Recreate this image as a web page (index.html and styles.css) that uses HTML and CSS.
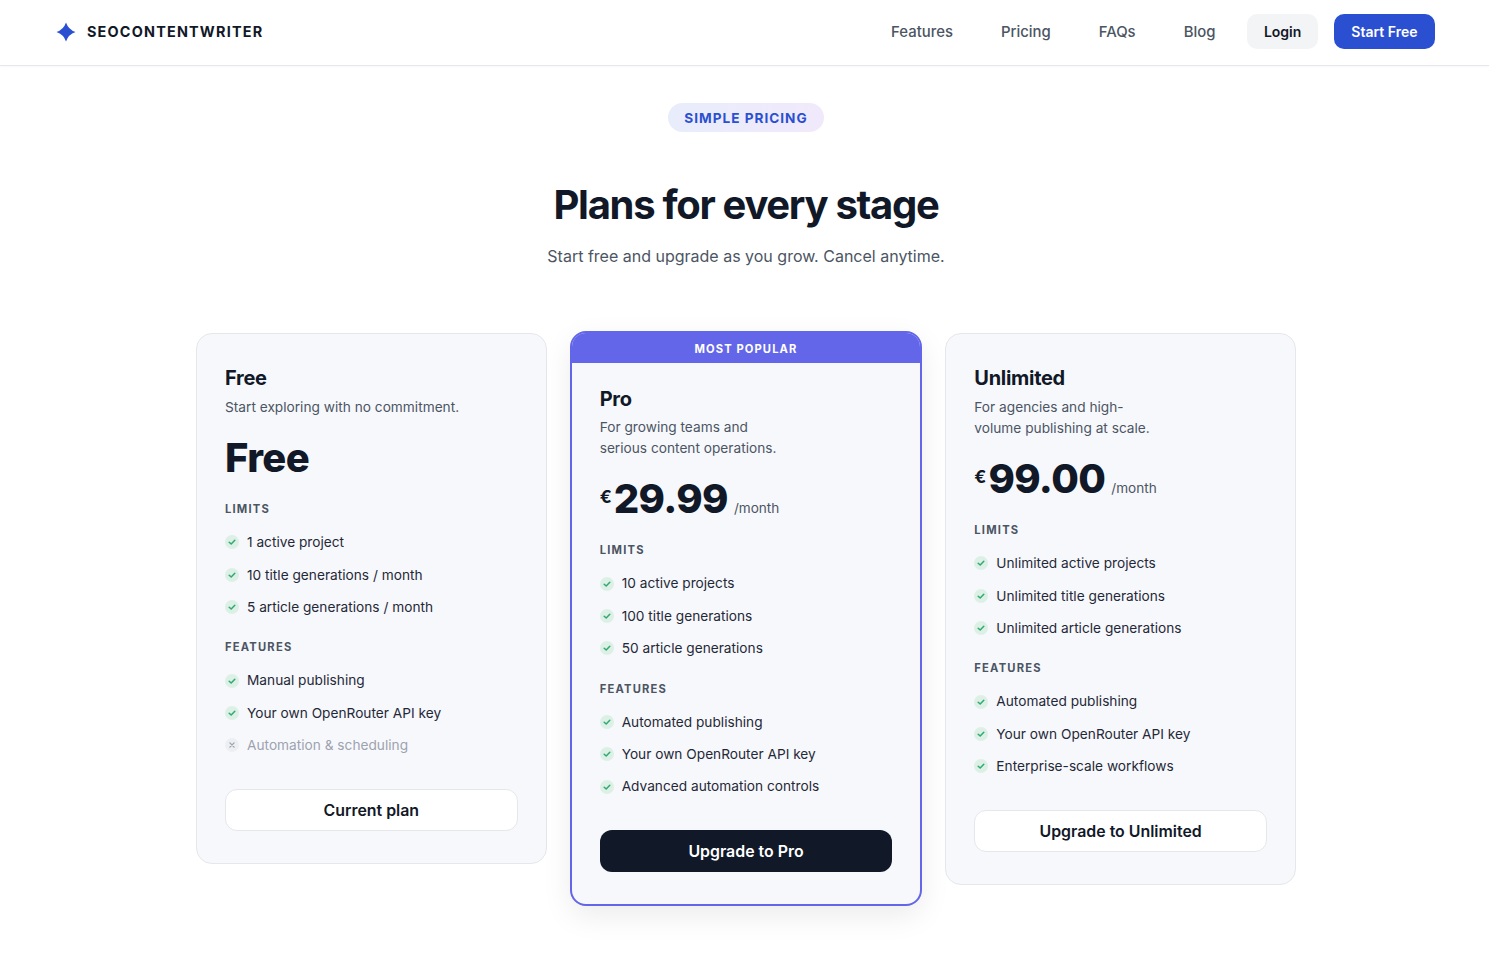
FILE: index.html
```html
<!DOCTYPE html>
<html lang="en">
<head>
    <meta charset="UTF-8">
    <meta name="viewport" content="width=device-width, initial-scale=1.0">
    <title>Pricing - SEOContentWriter</title>
    <link rel="stylesheet" href="styles.css">
</head>
<body>
    <!-- Header -->
    <header class="header">
        <a class="brand" href="#">
            <svg class="brand__icon" viewBox="0 0 20 20" aria-hidden="true">
                <path d="M10 0.5 Q12.4 7.6 19.5 10 Q12.4 12.4 10 19.5 Q7.6 12.4 0.5 10 Q7.6 7.6 10 0.5 Z"/>
            </svg>
            <span>SEOCONTENTWRITER</span>
        </a>
        <nav class="nav">
            <a class="nav__link" href="#">Features</a>
            <a class="nav__link" href="#">Pricing</a>
            <a class="nav__link" href="#">FAQs</a>
            <a class="nav__link" href="#">Blog</a>
            <a class="nav__btn nav__btn--login" href="#">Login</a>
            <a class="nav__btn nav__btn--start" href="#">Start Free</a>
        </nav>
    </header>

    <main class="pricing">
        <div class="pill">SIMPLE PRICING</div>
        <h1 class="pricing__title">Plans for every stage</h1>
        <p class="pricing__sub">Start free and upgrade as you grow. Cancel anytime.</p>

        <div class="plans">
            <!-- Free -->
            <section class="plan">
                <div class="plan__body">
                    <h2 class="plan__name">Free</h2>
                    <p class="plan__desc">Start exploring with no commitment.</p>
                    <div class="price"><span class="price__value">Free</span></div>
                    <h3 class="plan__label">LIMITS</h3>
                    <ul class="list">
                        <li class="list__item"><svg class="tick" viewBox="0 0 14 14"><circle class="tick__bg" cx="7" cy="7" r="7"/><path class="tick__mark" d="M4.2 7.2 L6.2 9 L9.8 5.2"/></svg>1 active project</li>
                        <li class="list__item"><svg class="tick" viewBox="0 0 14 14"><circle class="tick__bg" cx="7" cy="7" r="7"/><path class="tick__mark" d="M4.2 7.2 L6.2 9 L9.8 5.2"/></svg>10 title generations / month</li>
                        <li class="list__item"><svg class="tick" viewBox="0 0 14 14"><circle class="tick__bg" cx="7" cy="7" r="7"/><path class="tick__mark" d="M4.2 7.2 L6.2 9 L9.8 5.2"/></svg>5 article generations / month</li>
                    </ul>
                    <h3 class="plan__label">FEATURES</h3>
                    <ul class="list">
                        <li class="list__item"><svg class="tick" viewBox="0 0 14 14"><circle class="tick__bg" cx="7" cy="7" r="7"/><path class="tick__mark" d="M4.2 7.2 L6.2 9 L9.8 5.2"/></svg>Manual publishing</li>
                        <li class="list__item"><svg class="tick" viewBox="0 0 14 14"><circle class="tick__bg" cx="7" cy="7" r="7"/><path class="tick__mark" d="M4.2 7.2 L6.2 9 L9.8 5.2"/></svg>Your own OpenRouter API key</li>
                        <li class="list__item list__item--off"><svg class="tick" viewBox="0 0 14 14"><circle class="cross__bg" cx="7" cy="7" r="7"/><path class="cross__mark" d="M4.9 4.9 L9.1 9.1 M9.1 4.9 L4.9 9.1"/></svg>Automation &amp; scheduling</li>
                    </ul>
                    <a class="btn btn--light" href="#">Current plan</a>
                </div>
            </section>

            <!-- Pro -->
            <section class="plan plan--popular">
                <div class="plan__badge">MOST POPULAR</div>
                <div class="plan__body">
                    <h2 class="plan__name">Pro</h2>
                    <p class="plan__desc">For growing teams and<br>serious content operations.</p>
                    <div class="price"><span class="price__cur">€</span><span class="price__value">29.99</span><span class="price__per">/month</span></div>
                    <h3 class="plan__label">LIMITS</h3>
                    <ul class="list">
                        <li class="list__item"><svg class="tick" viewBox="0 0 14 14"><circle class="tick__bg" cx="7" cy="7" r="7"/><path class="tick__mark" d="M4.2 7.2 L6.2 9 L9.8 5.2"/></svg>10 active projects</li>
                        <li class="list__item"><svg class="tick" viewBox="0 0 14 14"><circle class="tick__bg" cx="7" cy="7" r="7"/><path class="tick__mark" d="M4.2 7.2 L6.2 9 L9.8 5.2"/></svg>100 title generations</li>
                        <li class="list__item"><svg class="tick" viewBox="0 0 14 14"><circle class="tick__bg" cx="7" cy="7" r="7"/><path class="tick__mark" d="M4.2 7.2 L6.2 9 L9.8 5.2"/></svg>50 article generations</li>
                    </ul>
                    <h3 class="plan__label">FEATURES</h3>
                    <ul class="list">
                        <li class="list__item"><svg class="tick" viewBox="0 0 14 14"><circle class="tick__bg" cx="7" cy="7" r="7"/><path class="tick__mark" d="M4.2 7.2 L6.2 9 L9.8 5.2"/></svg>Automated publishing</li>
                        <li class="list__item"><svg class="tick" viewBox="0 0 14 14"><circle class="tick__bg" cx="7" cy="7" r="7"/><path class="tick__mark" d="M4.2 7.2 L6.2 9 L9.8 5.2"/></svg>Your own OpenRouter API key</li>
                        <li class="list__item"><svg class="tick" viewBox="0 0 14 14"><circle class="tick__bg" cx="7" cy="7" r="7"/><path class="tick__mark" d="M4.2 7.2 L6.2 9 L9.8 5.2"/></svg>Advanced automation controls</li>
                    </ul>
                    <a class="btn btn--dark" href="#">Upgrade to Pro</a>
                </div>
            </section>

            <!-- Unlimited -->
            <section class="plan">
                <div class="plan__body">
                    <h2 class="plan__name">Unlimited</h2>
                    <p class="plan__desc">For agencies and high-<br>volume publishing at scale.</p>
                    <div class="price"><span class="price__cur">€</span><span class="price__value">99.00</span><span class="price__per">/month</span></div>
                    <h3 class="plan__label">LIMITS</h3>
                    <ul class="list">
                        <li class="list__item"><svg class="tick" viewBox="0 0 14 14"><circle class="tick__bg" cx="7" cy="7" r="7"/><path class="tick__mark" d="M4.2 7.2 L6.2 9 L9.8 5.2"/></svg>Unlimited active projects</li>
                        <li class="list__item"><svg class="tick" viewBox="0 0 14 14"><circle class="tick__bg" cx="7" cy="7" r="7"/><path class="tick__mark" d="M4.2 7.2 L6.2 9 L9.8 5.2"/></svg>Unlimited title generations</li>
                        <li class="list__item"><svg class="tick" viewBox="0 0 14 14"><circle class="tick__bg" cx="7" cy="7" r="7"/><path class="tick__mark" d="M4.2 7.2 L6.2 9 L9.8 5.2"/></svg>Unlimited article generations</li>
                    </ul>
                    <h3 class="plan__label">FEATURES</h3>
                    <ul class="list">
                        <li class="list__item"><svg class="tick" viewBox="0 0 14 14"><circle class="tick__bg" cx="7" cy="7" r="7"/><path class="tick__mark" d="M4.2 7.2 L6.2 9 L9.8 5.2"/></svg>Automated publishing</li>
                        <li class="list__item"><svg class="tick" viewBox="0 0 14 14"><circle class="tick__bg" cx="7" cy="7" r="7"/><path class="tick__mark" d="M4.2 7.2 L6.2 9 L9.8 5.2"/></svg>Your own OpenRouter API key</li>
                        <li class="list__item"><svg class="tick" viewBox="0 0 14 14"><circle class="tick__bg" cx="7" cy="7" r="7"/><path class="tick__mark" d="M4.2 7.2 L6.2 9 L9.8 5.2"/></svg>Enterprise-scale workflows</li>
                    </ul>
                    <a class="btn btn--light" href="#">Upgrade to Unlimited</a>
                </div>
            </section>
        </div>
    </main>
</body>
</html>
```

FILE: styles.css
```css
* {
    margin: 0;
    padding: 0;
    box-sizing: border-box;
}

body {
    font-family: Inter, "Liberation Sans", sans-serif;
    background: #fff;
    color: #111827;
}

a {
    text-decoration: none;
    color: inherit;
}

ul {
    list-style: none;
}

/* Header */
.header {
    display: flex;
    justify-content: space-between;
    align-items: center;
    height: 66px;
    padding: 0 54px 2px 56px;
    border-bottom: 1px solid #e5e7eb;
    box-shadow: 0 1px 2px rgba(0, 0, 0, 0.03);
}

.brand {
    display: flex;
    align-items: center;
    gap: 11px;
    font-size: 14.4px;
    font-weight: 700;
    letter-spacing: 1.2px;
}

.brand__icon {
    width: 20px;
    height: 20px;
    fill: #2b4fd1;
}

.nav {
    display: flex;
    align-items: center;
}

.nav__link {
    margin-right: 48px;
    font-size: 14.9px;
    font-weight: 500;
    color: #4b5563;
}

.nav__link:nth-child(4) {
    margin-right: 32px;
}

.nav__btn {
    display: flex;
    align-items: center;
    height: 35px;
    border-radius: 10px;
    font-size: 14px;
    font-weight: 600;
}

.nav__btn--login {
    padding: 0 16.5px;
    background: #f3f4f6;
    margin-right: 16px;
}

.nav__btn--start {
    padding: 0 17.5px;
    background: #2b4fd1;
    color: #fff;
}

/* Heading */
.pricing {
    display: flex;
    flex-direction: column;
    align-items: center;
    padding-top: 37px;
    padding-left: 3px;
}

.pill {
    height: 29px;
    line-height: 30px;
    padding: 0 16px;
    border-radius: 15px;
    background: linear-gradient(90deg, #e8edfb, #f1e9fb);
    color: #2b4fd1;
    font-size: 13.6px;
    font-weight: 700;
    letter-spacing: 1px;
}

.pricing__title {
    margin-top: 49px;
    font-size: 40px;
    line-height: 48px;
    font-weight: 700;
    letter-spacing: -1.3px;
}

.pricing__sub {
    margin-top: 14px;
    font-size: 16px;
    line-height: 26px;
    color: #4b5563;
}

/* Plans */
.plans {
    display: grid;
    grid-template-columns: repeat(3, 1fr);
    gap: 24px;
    align-items: start;
    width: 1100px;
    margin-top: 64px;
    margin-bottom: 55px;
}

.plan {
    background: #f7f8fc;
    border: 1px solid #e5e7eb;
    border-radius: 16px;
}

.plan--popular {
    margin: -2px -1px 0;
    border: 2px solid #6366e8;
    overflow: hidden;
    box-shadow: 0 10px 30px rgba(0, 0, 0, 0.08);
}

.plan__badge {
    height: 30px;
    line-height: 32px;
    background: #6366e8;
    color: #fff;
    text-align: center;
    font-size: 11.2px;
    font-weight: 700;
    letter-spacing: 1.1px;
}

.plan__body {
    padding: 30px 28px 32px;
}

.plan--popular .plan__body {
    padding-top: 21.6px;
}

.plan__name {
    font-size: 20px;
    line-height: 28px;
    font-weight: 700;
    letter-spacing: -0.3px;
}

.plan__desc {
    margin-top: 4.6px;
    font-size: 13.7px;
    line-height: 21px;
    color: #4b5563;
}

.plan--popular .plan__desc {
    margin-top: 4.2px;
}

.price {
    display: flex;
    align-items: flex-start;
    margin-top: 15.6px;
    height: 50px;
}

.price__cur {
    margin-top: 13px;
    font-size: 17.6px;
    font-weight: 700;
    line-height: 20px;
    margin-right: 2px;
}

.price__value {
    font-size: 40px;
    line-height: 50px;
    font-weight: 800;
    letter-spacing: -0.6px;
}

.price__per {
    align-self: flex-end;
    margin-left: 6px;
    margin-bottom: 6.5px;
    font-size: 13.6px;
    line-height: 20px;
    color: #4b5563;
}

.plan__label {
    margin-top: 18px;
    font-size: 11.2px;
    line-height: 16px;
    font-weight: 700;
    letter-spacing: 1.2px;
    color: #4b5563;
}

.list {
    display: flex;
    flex-direction: column;
    gap: 12px;
    margin-top: 15px;
    margin-bottom: 22px;
}

.list + .plan__label {
    margin-top: 21px;
}

.list__item {
    display: flex;
    align-items: center;
    gap: 8px;
    font-size: 13.7px;
    line-height: 20.4px;
    color: #1f2937;
}

.list__item--off {
    color: #9ca3af;
}

.tick {
    flex: none;
    width: 14px;
    height: 14px;
}

.tick__bg {
    fill: #dcf0e6;
}

.tick__mark {
    fill: none;
    stroke: #34a873;
    stroke-width: 1.5;
    stroke-linecap: round;
    stroke-linejoin: round;
}

.cross__bg {
    fill: #eeeff3;
}

.cross__mark {
    fill: none;
    stroke: #9ca3af;
    stroke-width: 1.3;
    stroke-linecap: round;
}

.btn {
    display: flex;
    align-items: center;
    justify-content: center;
    height: 42px;
    margin-top: 33.4px;
    border-radius: 12px;
    font-size: 15.9px;
    font-weight: 600;
}

.btn--light {
    background: #fff;
    border: 1px solid #e5e7eb;
}

.btn--dark {
    background: #111827;
    color: #fff;
}
```
